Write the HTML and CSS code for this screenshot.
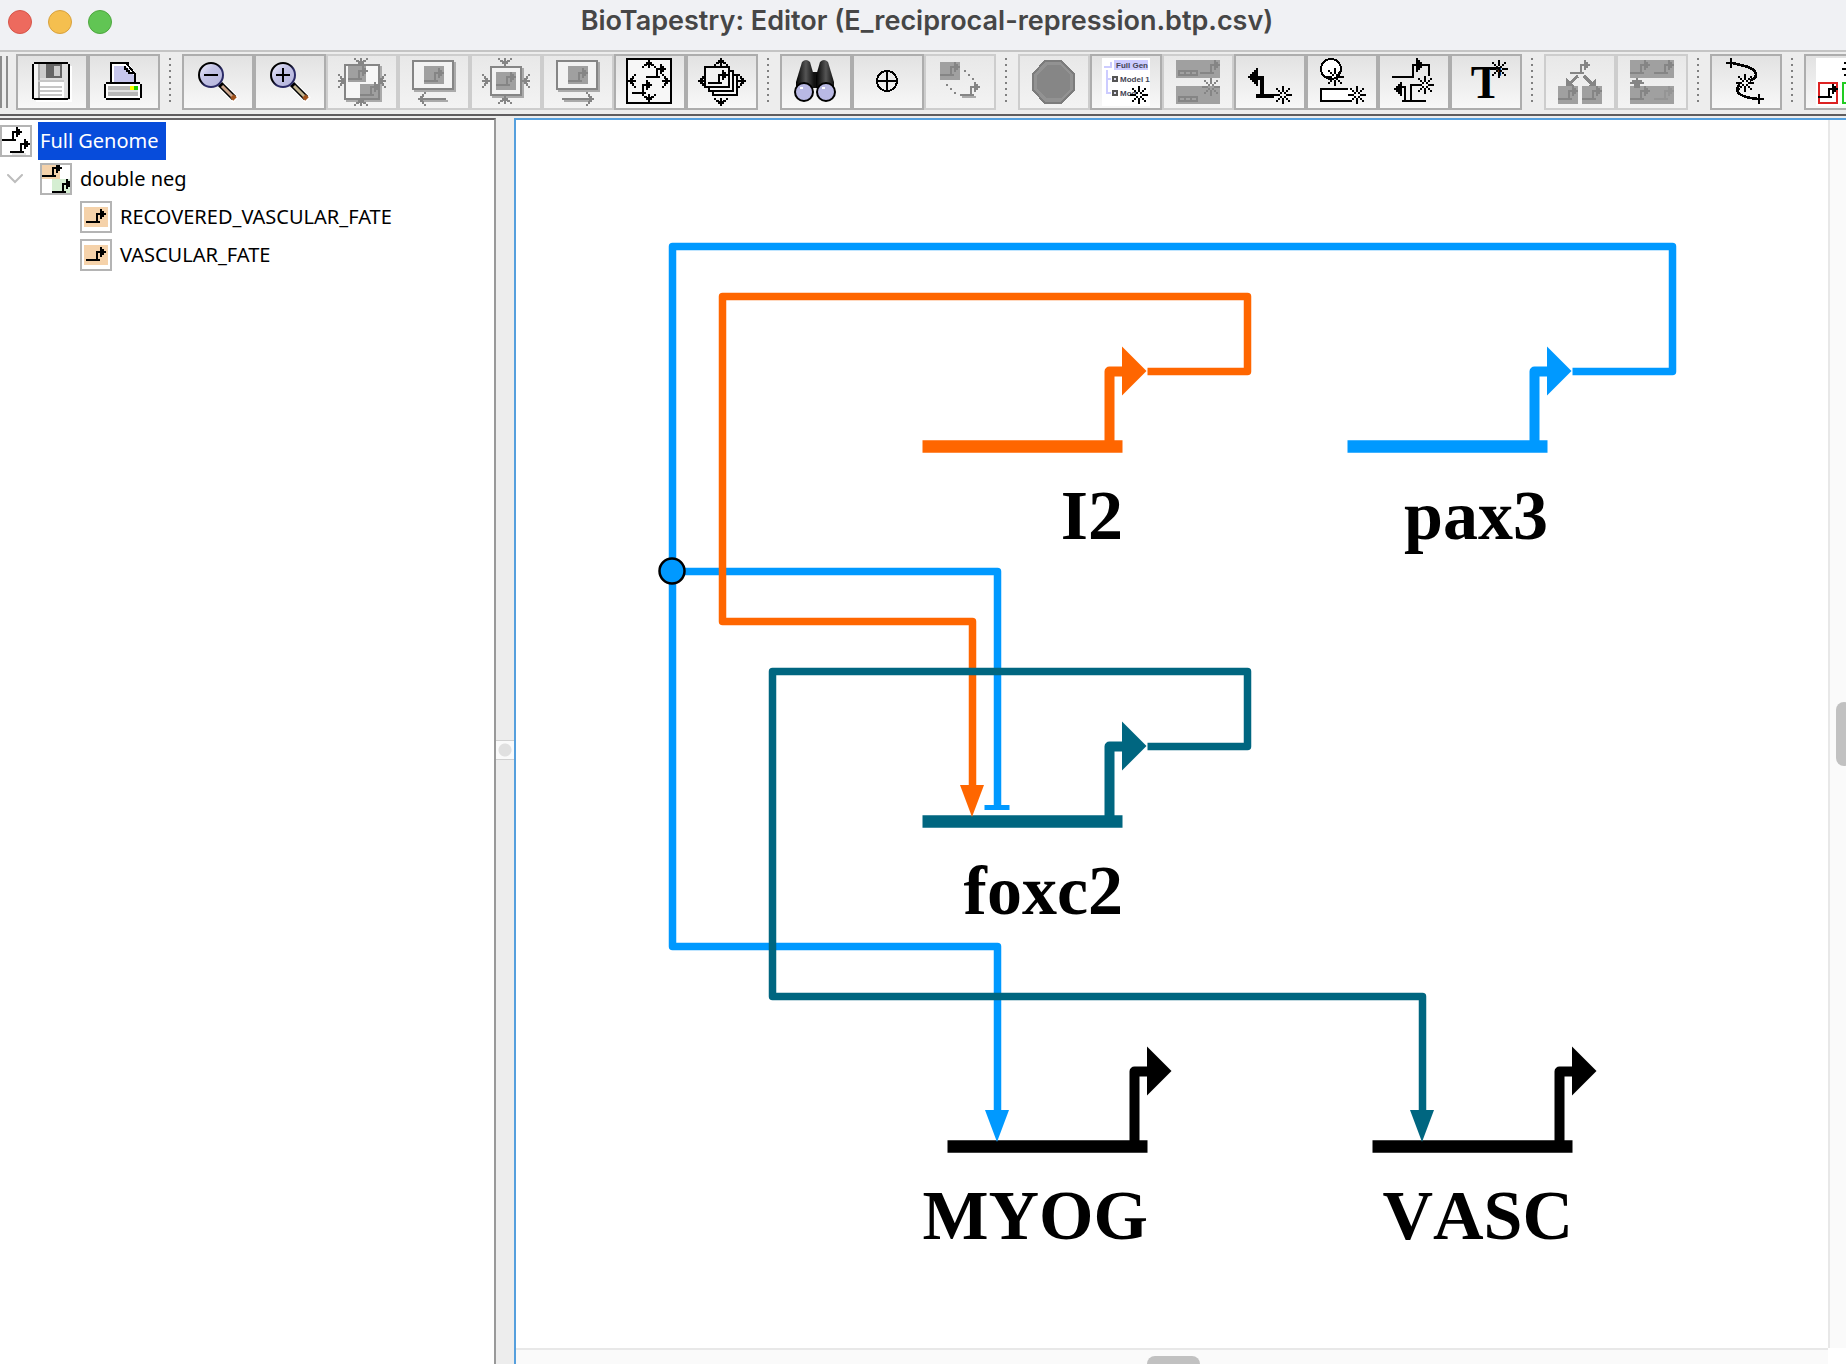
FILE: index.html
```
<!DOCTYPE html>
<html lang="en">
<head>
<meta charset="utf-8">
<title>BioTapestry: Editor (E_reciprocal-repression.btp.csv)</title>
<link rel="stylesheet" href="styles.css">
</head>
<body>
<svg class="defs" aria-hidden="true">
  <defs>
    <!-- gene glyph: baseline, stem and promoter arrow -->
    <g id="gene">
      <path d="M0 8.500h7M5.500 9V4.500h2" fill="none" stroke="currentColor"/>
      <path d="M7 2h1v1h1v1h1v1h-1v1h-1v1h-1z" fill="currentColor"/>
    </g>
    <!-- eight-rayed spark, centred on the origin -->
    <g id="spark" fill="currentColor">
      <path d="M-.5-4.500h1v3h-1zM-.5 1.500h1v3h-1zM-4.500-.5h3v1h-3zM1.500-.5h3v1h-3z"/>
      <path d="M-1.500-1.500h1v1h-1zM.5-1.500h1v1h-1zM-1.500.5h1v1h-1zM.5.5h1v1h-1z"/>
      <path d="M-2.500-2.500h1v1h-1zM1.500-2.500h1v1h-1zM-2.500 1.500h1v1h-1zM1.500 1.500h1v1h-1z"/>
      <path d="M-3.500-3.500h1v1h-1zM2.500-3.500h1v1h-1zM-3.500 2.500h1v1h-1zM2.500 2.500h1v1h-1z"/>
    </g>
    <!-- short arrow with its tip at the origin, pointing up -->
    <g id="tip">
      <path d="M-.5 0h1v1h1v1h1v1h1v1h-1v-1h-1.500v-.5h-.5v1.500h-1v-1.500h-.5v.5h-1.500v1h-1v-1h1v-1h1v-1h1z" fill="currentColor"/>
    </g>
    <linearGradient id="lens" x1="0" y1="0" x2="1" y2="1">
      <stop offset="0" stop-color="#f4f4ff"/><stop offset=".4" stop-color="#c4c4e6"/><stop offset="1" stop-color="#b4b4dc"/>
    </linearGradient>
    <linearGradient id="rim" x1="0" y1="0" x2="1" y2="1">
      <stop offset=".4" stop-color="#000"/><stop offset=".6" stop-color="#2a2a66"/>
    </linearGradient>
    <linearGradient id="barrel">
      <stop offset="0" stop-color="#000"/><stop offset=".55" stop-color="#555"/><stop offset="1" stop-color="#111"/>
    </linearGradient>
  </defs>
</svg>

<header class="titlebar">
  <div class="lights">
    <button class="light close" type="button" aria-label="Close"></button>
    <button class="light minimize" type="button" aria-label="Minimize"></button>
    <button class="light maximize" type="button" aria-label="Zoom window"></button>
  </div>
  <h1 class="title">BioTapestry: Editor (E_reciprocal-repression.btp.csv)</h1>
</header>

<div class="toolbar" role="toolbar" aria-label="Editor tools">
  <span class="grip"></span>
  <div class="group">
    <button class="tool" type="button" aria-label="Save">
      <svg viewBox="0 0 24 24">
        <path d="M4 2h15v1h2v18H2V3h2z" fill="#dedede"/>
        <path d="M2.500 3v17.500M3 2.500h17M20.500 3v17.500M3 20.500h17" stroke="#000" fill="none"/>
        <path d="M3 3h2v17H3z" fill="#f5f5f5"/><path d="M5 3h1v17H5z" fill="#aaa"/>
        <path d="M6 3h3v7H6z" fill="#ccc"/><path d="M9 3h8v7H9z" fill="#666"/><path d="M13 4h3v5h-3z" fill="#ccc"/>
        <path d="M6 12h12v8H6z" fill="#fff"/>
        <path d="M5 11.500h13M6 14.500h11M6 16.500h11M6 18.500h11" stroke="#c6c6c6"/>
        <path d="M21.500 4v17.500H4" stroke="#fff" fill="none"/>
      </svg>
    </button>
    <button class="tool" type="button" aria-label="Print">
      <svg viewBox="0 0 24 24">
        <path d="M5 12V2h9l4 6v4z" fill="#fff"/>
        <path d="M7 12V4h6l4 5v3z" fill="#c6c6ec"/>
        <path d="M5.500 12V2.500h9M13.500 3l4 5v4" stroke="#000" fill="none"/>
        <path d="M12.500 4v1.500h1v1h1v1h2" stroke="#000" fill="none"/>
        <path d="M2 13h19v7H2z" fill="#fff"/><path d="M4 14h15v2H4zM4 17h15v2H4z" fill="#b8b8b8"/>
        <path d="M4 16h15v1H4z" fill="#e0e0e0"/>
        <path d="M15 14h2v2h-2z" fill="#ff0"/><path d="M17 14h2v2h-2z" fill="#2c0"/>
        <path d="M3 12.500h17M2.500 13v7M20.500 13v7M3 20.500h17" stroke="#000"/>
      </svg>
    </button>
  </div>
  <span class="separator"></span>
  <div class="group">
    <button class="tool" type="button" aria-label="Zoom out">
      <svg viewBox="0 0 24 24" class="smooth">
        <path d="M14 14l7 7" stroke="#fff" stroke-width="4"/>
        <path d="M13 13l7 7" stroke="#000" stroke-width="3"/>
        <path d="M14 14l6 6" stroke="#cba58c" stroke-width="1.500"/><path d="M19 19l1.500 1.500" stroke="#a0521c" stroke-width="2.500"/>
        <circle cx="8.500" cy="8.500" r="6" fill="url(#lens)" stroke="url(#rim)"/>
        <path d="M5 8.500h7" stroke="#000"/>
      </svg>
    </button>
    <button class="tool" type="button" aria-label="Zoom in">
      <svg viewBox="0 0 24 24" class="smooth">
        <path d="M14 14l7 7" stroke="#fff" stroke-width="4"/>
        <path d="M13 13l7 7" stroke="#000" stroke-width="3"/>
        <path d="M14 14l6 6" stroke="#c2b490" stroke-width="1.500"/><path d="M19 19l1.500 1.500" stroke="#a0521c" stroke-width="2.500"/>
        <circle cx="8.500" cy="8.500" r="6" fill="url(#lens)" stroke="url(#rim)"/>
        <path d="M5 8.500h7M8.500 5v7" stroke="#000"/>
      </svg>
    </button>
    <button class="tool" type="button" aria-label="Zoom to all models" disabled>
      <svg viewBox="0 0 24 24">
        <path d="M4 21.500h17.500V4" fill="none" stroke="#aaa"/>
        <path d="M3.500 3.500h17v17h-17z" fill="#f6f6f6" stroke="currentColor"/>
        <path d="M5 4h9v8H5zM11 13h9v7h-9z" fill="#a0a0a0"/>
        <use href="#gene" x="5" y="2"/><use href="#gene" x="11" y="10"/>
        <use href="#tip" transform="translate(11.500 4) rotate(180)"/><use href="#tip" transform="translate(11.500 20)"/>
        <use href="#tip" transform="translate(4 11.500) rotate(90)"/><use href="#tip" transform="translate(20 11.500) rotate(-90)"/>
      </svg>
    </button>
    <button class="tool" type="button" aria-label="Zoom to previous selection" disabled>
      <svg viewBox="0 0 24 24">
        <path d="M2 16.500h20.500V2M6 21.500h13" fill="none" stroke="#aaa"/>
        <path d="M1.500 1.500h20v14h-20z" fill="#f2f2f2" stroke="currentColor"/>
        <path d="M7 4h10v9H7z" fill="#a0a0a0"/><use href="#gene" x="7" y="3"/>
        <path d="M5 20.500h13" stroke="currentColor"/><use href="#tip" transform="translate(4 20.500) rotate(-90)"/>
      </svg>
    </button>
    <button class="tool" type="button" aria-label="Zoom to current selection" disabled>
      <svg viewBox="0 0 24 24">
        <path d="M5 19.500h15.500V5" fill="none" stroke="#aaa"/>
        <path d="M4.500 4.500h15v14h-15z" fill="#f2f2f2" stroke="currentColor"/>
        <path d="M7 7h10v9H7z" fill="#a0a0a0"/><use href="#gene" x="7" y="5"/>
        <use href="#tip" transform="translate(11.500 4) rotate(180)"/><use href="#tip" transform="translate(11.500 19)"/>
        <use href="#tip" transform="translate(4 11.500) rotate(90)"/><use href="#tip" transform="translate(20 11.500) rotate(-90)"/>
      </svg>
    </button>
    <button class="tool" type="button" aria-label="Zoom to next selection" disabled>
      <svg viewBox="0 0 24 24">
        <path d="M2 16.500h20.500V2M5 21.500h13" fill="none" stroke="#aaa"/>
        <path d="M1.500 1.500h20v14h-20z" fill="#f2f2f2" stroke="currentColor"/>
        <path d="M7 4h10v9H7z" fill="#a0a0a0"/><use href="#gene" x="7" y="3"/>
        <path d="M4 20.500h14" stroke="currentColor"/><use href="#tip" transform="translate(20 20.500) rotate(90)"/>
      </svg>
    </button>
    <button class="tool" type="button" aria-label="Zoom to current model">
      <svg viewBox="0 0 24 24">
        <path d="M.5.5h22v22H.5z" fill="#f7f7f7" stroke="#000"/>
        <use href="#tip" x="11.500" y="1"/><use href="#tip" transform="translate(11.500 22) rotate(180)"/>
        <use href="#tip" transform="translate(1 11.500) rotate(-90)"/><use href="#tip" transform="translate(22 11.500) rotate(90)"/>
        <use href="#gene" x="3" y="9"/><use href="#gene" x="10" y="1"/>
      </svg>
    </button>
    <button class="tool" type="button" aria-label="Zoom to worksheet">
      <svg viewBox="0 0 24 24">
        <path d="M7.500 8.500h12v10h-12z" fill="#f7f7f7" stroke="#000"/><path d="M5.500 6.500h12v10h-12z" fill="#f7f7f7" stroke="#000"/>
        <path d="M3.500 4.500h12v10h-12z" fill="#f2f2f2" stroke="#000"/><use href="#gene" x="5" y="4"/>
        <use href="#tip" x="11.500" y="0"/><use href="#tip" transform="translate(11.500 24) rotate(180)"/>
        <use href="#tip" transform="translate(0 11.500) rotate(-90)"/><use href="#tip" transform="translate(24 11.500) rotate(90)"/>
      </svg>
    </button>
  </div>
  <span class="separator"></span>
  <div class="group">
    <button class="tool" type="button" aria-label="Search">
      <svg viewBox="0 0 24 24" class="smooth">
        <path d="M9 7h6v8H9z" fill="#111"/>
        <path d="M5 2q2-2 4 0l2 7v6H2V12z" fill="url(#barrel)"/><path d="M14 2q2-2 4 0l3 10v3h-9V9z" fill="url(#barrel)"/>
        <circle cx="6" cy="17" r="4.500" fill="#b9b9e4" stroke="#000"/><circle cx="17" cy="17" r="4.500" fill="#b9b9e4" stroke="#000"/>
        <path d="M4 15h1.500M15 15h1.500" stroke="#fff"/>
      </svg>
    </button>
    <button class="tool" type="button" aria-label="Center on selection">
      <svg viewBox="0 0 24 24">
        <circle cx="11.500" cy="11.500" r="5" fill="none" stroke="#000"/><path d="M6 11.500h11M11.500 6v11" stroke="#000"/>
      </svg>
    </button>
    <button class="tool" type="button" aria-label="Pull down from parent" disabled>
      <svg viewBox="0 0 24 24">
        <path d="M2 2h10v9H2z" fill="#a0a0a0"/><use href="#gene" x="2" y="0"/>
        <path d="M14 6h1v1h-1zM16 8h1v1h-1zM18 10h1v1h-1zM5 13h1v1H5zM7 15h1v1H7zM9 17h1v1H9z" fill="currentColor"/>
        <path d="M13 19.500h7" stroke="#aaa"/><use href="#gene" x="12" y="10"/>
      </svg>
    </button>
  </div>
  <span class="separator"></span>
  <div class="group">
    <button class="tool" type="button" aria-label="Cancel" disabled>
      <svg viewBox="0 0 24 24">
        <path d="M7.500 1.500h8l6.500 6.500v8l-6.500 6.500h-8L1.500 16V8z" fill="#929292" stroke="#7c7c7c"/>
        <path d="M8.500 3.500h7l4.500 5v7l-4.500 4.500h-7L3.500 15.500v-7z" fill="#868686"/>
      </svg>
    </button>
    <button class="tool" type="button" aria-label="Add model">
      <svg viewBox="0 0 24 24">
        <path d="M0 0h24v24H0z" fill="#fff"/><path d="M6 1h17v5H6z" fill="#ccf"/>
        <path d="M1 4.500h3.500V2M2.500 6v11.500h2M2.500 10.500h2" fill="none" stroke="#ccf"/>
        <path d="M5.500 9.500h2v2h-2zM5.500 16.500h2v2h-2z" fill="#dde" stroke="#555"/>
        <text class="icon-label" x="7" y="5">Full Gen</text>
        <text class="icon-label" x="9" y="12">Model 1</text>
        <text class="icon-label" x="9" y="19">Mod</text>
        <use href="#spark" x="18.500" y="18.500"/>
      </svg>
    </button>
    <button class="tool" type="button" aria-label="Add region" disabled>
      <svg viewBox="0 0 24 24">
        <path d="M1 1h22v9H1zM1 14h22v9H1z" fill="#a0a0a0"/>
        <path d="M2.500 6.500h9v2h-9zM5.500 6v3M8.500 6v3M2.500 19.500h9v2h-9zM5.500 19v3M8.500 19v3" fill="none" stroke="currentColor"/>
        <use href="#gene" x="13" y="-1"/><use href="#spark" x="18.500" y="14.500"/>
      </svg>
    </button>
    <button class="tool" type="button" aria-label="Add gene">
      <svg viewBox="0 0 24 24">
        <path d="M1 9h1V8h1V7h1V6h1V5h1v4h3v9h5v2H5v-2h2v-7H6v3H5v-1H4v-1H3v-1H2v-1H1z"/>
        <use href="#spark" x="18.500" y="18.500"/>
      </svg>
    </button>
    <button class="tool" type="button" aria-label="Add node">
      <svg viewBox="0 0 24 24">
        <circle cx="6.500" cy="5.500" r="5" fill="#fff" stroke="#000"/>
        <path d="M1.500 15.500h16v6h-16z" fill="#fff"/><path d="M15 15.500H1.500v6H16" fill="none" stroke="#000"/>
        <use href="#spark" x="8.500" y="9.500"/><use href="#spark" x="19.500" y="18.500"/>
      </svg>
    </button>
    <button class="tool" type="button" aria-label="Add link">
      <svg viewBox="0 0 24 24">
        <path d="M1 9.500h11M11.500 9V3.500h8V9M6 14.500h1.500V21M10.500 21v-7.500H14M6 21.500h12" fill="none" stroke="#000"/>
        <path d="M13 0h1v1h1v1h1v1h1v1h-1v1h-1v1h-1v1h-1zM2 15h1v-1h1v-1h1v-1h1v7H5v-1H4v-1H3v-1H2z"/>
        <use href="#spark" x="17.500" y="13.500"/>
      </svg>
    </button>
    <button class="tool" type="button" aria-label="Add note">
      <svg viewBox="0 0 24 24">
        <text class="icon-letter" x="12" y="20">T</text><use href="#spark" x="18.500" y="5.500"/>
      </svg>
    </button>
  </div>
  <span class="separator"></span>
  <div class="group">
    <button class="tool" type="button" aria-label="Propagate down" disabled>
      <svg viewBox="0 0 24 24">
        <use href="#gene" x="7" y="-1"/>
        <path d="M1 14h10v9H1zM13 14h10v9H13z" fill="#a0a0a0"/>
        <path d="M11 9l-4.500 4M14 9l4 4" stroke="currentColor" stroke-width="1.500"/>
        <path d="M5 10v4h4zM20 10v4h-4z" fill="currentColor"/>
        <use href="#gene" x="1" y="12"/><use href="#gene" x="13" y="12"/>
      </svg>
    </button>
    <button class="tool" type="button" aria-label="Include all in submodel" disabled>
      <svg viewBox="0 0 24 24">
        <path d="M1 1h22v9H1zM1 14h22v9H1z" fill="#a0a0a0"/>
        <use href="#gene" x="1" y="-1"/><use href="#gene" x="13" y="-1"/><use href="#gene" x="1" y="12"/><use class="faint" href="#gene" x="13" y="12"/>
        <path d="M4 10h1v1h2v1h1v1H6v2H3v-2H1v-1h1v-1h2z" fill="currentColor"/>
      </svg>
    </button>
  </div>
  <span class="separator"></span>
  <div class="group">
    <button class="tool" type="button" aria-label="Relayout link">
      <svg viewBox="0 0 24 24">
        <path d="M5 2.500C12 4 17 5 17 8.500S7 12 7.500 16c.5 3 5 4 11 4.500" fill="none" stroke="#000" stroke-width="1.300"/>
        <path d="M2 2.500h5M4.500 0v5M16 20.500h5M18.500 18v5" stroke="#000" stroke-width="1.300"/>
        <path d="M9 10h5v5H9z" fill="#f2f2f2"/><use href="#spark" x="11.500" y="12.500"/>
      </svg>
    </button>
  </div>
  <span class="separator"></span>
  <div class="group">
    <button class="tool" type="button" aria-label="Expand path">
      <svg viewBox="0 0 24 24">
        <path d="M0 0h24v24H0z" fill="#fff"/>
        <path d="M1.500 12.500h9v10h-9z" fill="#fff" stroke="#d22"/><path d="M13.500 12.500h9v10h-9z" fill="#fff" stroke="#2c2"/>
        <use href="#gene" x="1" y="11"/><path d="M13 5.500h7M14 2.500h3M14 8.500h3" stroke="#000"/>
      </svg>
    </button>
  </div>
</div>

<main class="workspace">
  <nav class="models" aria-label="Models">
    <ul class="tree">
      <li>
        <a class="node selected" href="#full-genome">
          <svg class="node-icon" viewBox="0 0 14 14"><use href="#gene" x="0" y="-2"/><path d="M5 13.500h7" stroke="#e4e4e4"/><use href="#gene" x="4" y="4"/></svg>
          <span class="node-label">Full Genome</span>
        </a>
        <ul class="tree">
          <li>
            <div class="branch">
              <button class="toggle" type="button" aria-label="Collapse double neg" aria-expanded="true">
                <svg viewBox="0 0 16 10"><path d="M1 1l7 7 7-7"/></svg>
              </button>
              <a class="node" href="#double-neg">
                <svg class="node-icon" viewBox="0 0 14 14"><path d="M0 0h9v7H0z" fill="#f5d2aa"/><path d="M5 7h9v7H5z" fill="#d5eed2"/><use href="#gene" x="0" y="-3"/><use href="#gene" x="5" y="5"/></svg>
                <span class="node-label">double neg</span>
              </a>
            </div>
            <ul class="tree leaves">
              <li><a class="node" href="#recovered">
                <svg class="node-icon" viewBox="0 0 14 14"><path d="M1 2h12v10H1z" fill="#f5d2aa"/><use href="#gene" x="2" y="1"/></svg>
                <span class="node-label">RECOVERED_VASCULAR_FATE</span></a></li>
              <li><a class="node" href="#vascular">
                <svg class="node-icon" viewBox="0 0 14 14"><path d="M1 2h12v10H1z" fill="#f5d2aa"/><use href="#gene" x="2" y="1"/></svg>
                <span class="node-label">VASCULAR_FATE</span></a></li>
            </ul>
          </li>
        </ul>
      </li>
    </ul>
  </nav>
  <div class="splitter" role="separator" aria-orientation="vertical"><span class="knob"></span></div>
  <section class="canvas" aria-label="Network">
    <svg class="network" viewBox="516 120 1312 1228" preserveAspectRatio="xMinYMin meet">
      <!-- links -->
      <g class="link blue">
        <path d="M1572.500 371.500h100v-125h-1000v700h325V1112"/>
        <path d="M672.500 571.500h325V807"/>
        <path class="foot" d="M984.500 807.500h25"/>
      </g>
      <path class="link orange" d="M1147.500 371.500h100v-75h-525v325h250V787"/>
      <path class="link teal" d="M1147.500 746.500h100v-75h-475v325h650V1112"/>
      <circle class="junction" cx="672" cy="571" r="12.500"/>
      <!-- genes -->
      <g class="gene orange">
        <path class="bar" d="M922.500 446.500h200"/><path class="stem" d="M1109.500 446v-74.500h14"/><path class="head" d="M1122 346.500v49l24.500-24.500z"/>
      </g>
      <g class="gene blue">
        <path class="bar" d="M1347.500 446.500h200"/><path class="stem" d="M1534.500 446v-74.500h14"/><path class="head" d="M1547 346.500v49l24.500-24.500z"/>
      </g>
      <g class="gene teal">
        <path class="bar" d="M922.500 821.500h200"/><path class="stem" d="M1109.500 821v-74.500h14"/><path class="head" d="M1122 721.500v49l24.500-24.500z"/>
      </g>
      <g class="gene black">
        <path class="bar" d="M947.500 1146.500h200"/><path class="stem" d="M1134.500 1146v-74.500h14"/><path class="head" d="M1147 1046.500v49l24.500-24.500z"/>
      </g>
      <g class="gene black">
        <path class="bar" d="M1372.500 1146.500h200"/><path class="stem" d="M1559.500 1146v-74.500h14"/><path class="head" d="M1572 1046.500v49l24.500-24.500z"/>
      </g>
      <!-- link arrowheads, over the gene bars -->
      <path class="head orange" d="M960 785h24l-12 32z"/>
      <path class="head blue" d="M985 1110h24l-12 32z"/>
      <path class="head teal" d="M1410 1110h24l-12 32z"/>
      <g class="names">
        <text x="1123" y="539">I2</text>
        <text x="1548" y="539">pax3</text>
        <text x="1123" y="914">foxc2</text>
        <text x="1148" y="1239">MYOG</text>
        <text x="1573" y="1239">VASC</text>
      </g>
    </svg>
    <div class="scroll vertical"><span class="thumb"></span></div>
    <div class="scroll horizontal"><span class="thumb"></span></div>
  </section>
</main>
</body>
</html>
```
FILE: styles.css
```
* { box-sizing: border-box; }

body {
  margin: 0;
  height: 100vh;
  display: flex;
  flex-direction: column;
  overflow: hidden;
  background: #ededed;
  color: #000;
  font-family: "Noto Sans", "Open Sans", sans-serif;
  font-size: 20px;
}

button { padding: 0; border: 0; background: none; color: inherit; font: inherit; }
.defs { position: absolute; width: 0; height: 0; }

/* title bar */
.titlebar {
  position: relative;
  flex: none;
  height: 52px;
  display: flex;
  justify-content: center;
  padding-left: 8px;
  background: #f0f1f4;
  border-bottom: 2px solid #c4c4c4;
}
.lights { position: absolute; left: 8px; top: 10px; display: flex; gap: 16px; }
.light { width: 24px; height: 24px; border-radius: 50%; border: 1px solid; }
.close { background: #ed6a5e; border-color: #d65549; }
.minimize { background: #f5bf4f; border-color: #d8a13d; }
.maximize { background: #61c554; border-color: #4ea73f; }
.title {
  margin: 0;
  font: 600 27px/42px Inter, "Liberation Sans", sans-serif;
  color: #464646;
  white-space: nowrap;
}

/* toolbar */
.toolbar {
  flex: none;
  display: flex;
  padding: 2px 0 4px;
  overflow: hidden;
  border-bottom: 2px solid #5f5d5f;
}
.grip {
  flex: none;
  width: 8px;
  height: 52px;
  margin: 2px 8px 0 0;
  border: solid #8c8c8c;
  border-width: 0 2px;
}
.group { flex: none; display: flex; }
.tool {
  width: 72px;
  height: 56px;
  display: grid;
  place-items: center;
  border: 2px solid #adadad;
  background: linear-gradient(#e2e2e2, #f8f8f8);
  color: #000;
}
.tool:disabled {
  border-color: #cdcdcd;
  background: linear-gradient(#e8e8e8, #f3f3f3);
  color: #858585;
}
.tool svg { width: 48px; height: 48px; overflow: visible; shape-rendering: crispEdges; }
.tool svg.smooth { shape-rendering: auto; }
.icon-label { font: 700 4px "Liberation Sans", sans-serif; fill: #445; }
.icon-letter { font: 700 23px "Liberation Serif", serif; text-anchor: middle; }
.faint { opacity: .4; }
.separator {
  flex: none;
  width: 2px;
  height: 44px;
  margin: 4px 11px 0 9px;
  background: repeating-linear-gradient(#808080 0 2px, transparent 2px 6px);
}

/* workspace */
.workspace { flex: 1; min-height: 0; display: flex; padding-top: 2px; }
.models {
  flex: none;
  width: 496px;
  background: #fff;
  border: solid #656365;
  border-width: 2px 2px 0 0;
  border-right-color: #999;
  padding-top: 2px;
}
.tree { margin: 0; padding: 0; list-style: none; }
.leaves { padding-left: 80px; }
.branch { display: flex; }
.toggle { width: 40px; height: 38px; padding-left: 7px; display: flex; align-items: center; }
.toggle svg { width: 16px; height: 10px; fill: none; stroke: #bdbdbd; stroke-width: 2; stroke-linecap: round; }
.node { display: flex; align-items: center; gap: 6px; height: 38px; color: #000; text-decoration: none; }
.node-icon { width: 32px; height: 32px; border: 2px solid #b4b4b4; background: #fff; shape-rendering: crispEdges; }
.node-label { padding: 0 7px 0 2px; line-height: 38px; white-space: nowrap; }
.selected .node-label { background: #074cdb; color: #fff; }

.splitter { flex: none; width: 18px; display: flex; align-items: center; padding-top: 18px; }
.knob {
  flex: 1;
  height: 20px;
  border: solid #d0d0d0;
  border-width: 1px 0;
  background: radial-gradient(circle at center, #e0e0e0 6px, #fafafa 7px);
}

.canvas {
  flex: 1;
  min-width: 0;
  display: grid;
  grid-template: minmax(0, 1fr) 16px / minmax(0, 1fr) 18px;
  background: #fff;
  border: solid #559fdd;
  border-width: 2px 0 0 2px;
}
.network { width: 100%; height: 100%; display: block; }
.scroll { display: flex; background: #fafafa; overflow: hidden; }
.vertical { border-left: 2px solid #e8e8e8; flex-direction: column; justify-content: center; padding: 0 0 0 6px; }
.horizontal { border-top: 2px solid #e8e8e8; justify-content: center; padding: 6px 0 0 3px; }
.thumb { flex: none; background: #c1c1c1; }
.vertical .thumb { width: 16px; height: 64px; border-radius: 8px; }
.horizontal .thumb { width: 53px; height: 16px; border-radius: 8px; }

/* network diagram */
.blue { --ink: #0099ff; }
.orange { --ink: #ff6600; }
.teal { --ink: #006680; }
.black { --ink: #000; }
.link { fill: none; stroke: var(--ink); stroke-width: 7.5; stroke-linejoin: round; }
.foot { stroke-width: 5; }
.bar { stroke: var(--ink); stroke-width: 12.5; }
.stem { fill: none; stroke: var(--ink); stroke-width: 10; stroke-linejoin: round; }
.head { fill: var(--ink); }
.junction { fill: #0099ff; stroke: #000; stroke-width: 2.5; }
.names { font: 700 70px "Liberation Serif", serif; text-anchor: end; font-kerning: none; }
```
